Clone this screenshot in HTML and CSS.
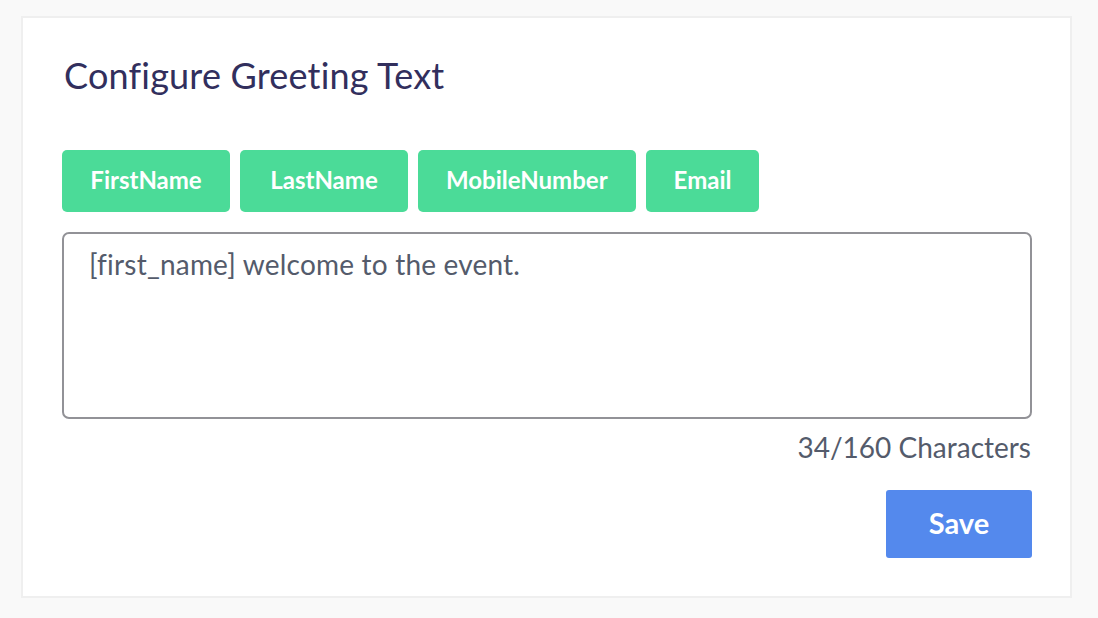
FILE: index.html
```html
<!DOCTYPE html>
<html>
<head>
<meta charset="utf-8">
<link rel="stylesheet" href="styles.css">
</head>
<body>
<div class="card">
  <h1 class="title">Configure Greeting Text</h1>
  <div class="tags">
    <button class="tag">FirstName</button>
    <button class="tag">LastName</button>
    <button class="tag">MobileNumber</button>
    <button class="tag">Email</button>
  </div>
  <textarea class="message">[first_name] welcome to the event.</textarea>
  <div class="counter">34/160 Characters</div>
  <div class="actions">
    <button class="save">Save</button>
  </div>
</div>
</body>
</html>
```
FILE: styles.css
```css
html, body {
  margin: 0;
  padding: 0;
  background: #f9f9f9;
  font-family: "Lato", "Noto Sans", sans-serif;
  font-variant-ligatures: none;
}
.card {
  box-sizing: border-box;
  margin: 16px 0 0 21px;
  width: 1051px;
  height: 582px;
  background: #ffffff;
  border: 2px solid #efefef;
  padding: 0 39px 0 39px;
  display: flex;
  flex-direction: column;
}
.title {
  margin: 37px 0 0 2px;
  font-size: 36px;
  line-height: 40px;
  font-weight: 400;
  letter-spacing: 0.2px;
  color: #322f5d;
}
.tags {
  display: flex;
  gap: 10px;
  margin-top: 55px;
}
.tag {
  min-width: 168px;
  height: 62px;
  border: none;
  border-radius: 5px;
  background: #4bdb98;
  color: #ffffff;
  font-family: inherit;
  font-variant-ligatures: none;
  font-size: 24px;
  font-weight: 700;
  padding: 0 28px 3px;
  cursor: pointer;
}
.tag:last-child {
  min-width: 0;
}
.message {
  box-sizing: border-box;
  margin-top: 20px;
  width: 970px;
  height: 187px;
  border: 2px solid #929297;
  border-radius: 7px;
  padding: 13px 25px;
  font-family: inherit;
  font-variant-ligatures: none;
  font-size: 28px;
  line-height: 34px;
  letter-spacing: 0.2px;
  color: #545b6b;
  resize: none;
  outline: none;
}
.counter {
  margin-top: 11px;
  text-align: right;
  font-size: 28px;
  line-height: 34px;
  color: #545b6b;
  width: 969px;
}
.actions {
  display: flex;
  justify-content: flex-end;
  width: 970px;
  margin-top: 26px;
}
.save {
  width: 146px;
  height: 68px;
  border: none;
  border-radius: 3px;
  background: #5489ed;
  color: #ffffff;
  font-family: inherit;
  font-size: 29px;
  font-weight: 700;
  padding: 0 0 4px;
}
```
